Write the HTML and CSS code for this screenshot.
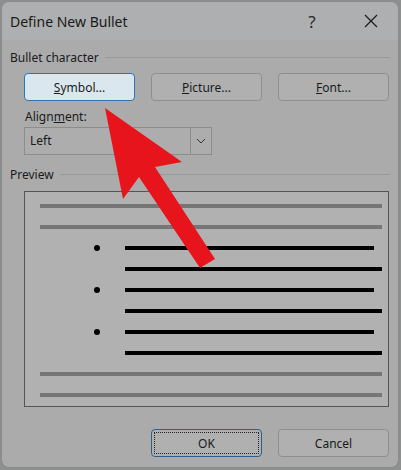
FILE: index.html
```html
<!DOCTYPE html>
<html lang="en">
<head>
    <meta charset="UTF-8">
    <title>Define New Bullet</title>
    <link rel="stylesheet" href="styles.css">
</head>
<body>
    <div class="dialog">
        <div class="titlebar">
            <span class="title">Define New Bullet</span>
            <span class="help">?</span>
            <span class="close">
                <svg width="14" height="14" viewBox="0 0 14 14"><path d="M1 1L13 13M13 1L1 13" stroke="#1e1e1e" stroke-width="1.3"/></svg>
            </span>
        </div>

        <div class="group-head"><span>Bullet character</span><i></i></div>
        <div class="btn-row">
            <button class="btn btn-active"><u>S</u>ymbol...</button>
            <button class="btn"><u>P</u>icture...</button>
            <button class="btn"><u>F</u>ont...</button>
        </div>

        <div class="field-label">Align<u>m</u>ent:</div>
        <div class="select">
            <span class="select-value">Left</span>
            <span class="select-arrow">
                <svg width="10" height="6" viewBox="0 0 10 6"><path d="M1 1L5 5L9 1" fill="none" stroke="#3a3a3a" stroke-width="1"/></svg>
            </span>
        </div>

        <div class="group-head preview-head"><span>Preview</span><i></i></div>
        <div class="preview">
            <div class="line gray"></div>
            <div class="line gray"></div>
            <div class="item"><b class="dot"></b><div class="line black short"></div></div>
            <div class="item"><div class="line black"></div></div>
            <div class="item"><b class="dot"></b><div class="line black short"></div></div>
            <div class="item"><div class="line black"></div></div>
            <div class="item"><b class="dot"></b><div class="line black short"></div></div>
            <div class="item"><div class="line black"></div></div>
            <div class="line gray"></div>
            <div class="line gray"></div>
        </div>

        <div class="footer">
            <button class="btn btn-ok"><span>OK</span></button>
            <button class="btn">Cancel</button>
        </div>

        <!-- red pointer drawn over the dialog -->
        <svg class="pointer" width="401" height="470" viewBox="0 0 401 470">
            <polygon points="105,108 182,162 155,167 215,259 200,268 139,177 123,199" fill="#e8141c"/>
        </svg>
    </div>
</body>
</html>
```

FILE: styles.css
```css
body {
    margin: 0;
    background-color: #8e8f8f;
    font-family: "Noto Sans", "Open Sans", sans-serif;
    color: #1a1a1a;
}
.dialog {
    position: relative;
    margin: 1px 2px 0 1px;
    height: 467px;
    background-color: #ababab;
    border: 1px solid #8a8a8a;
    border-radius: 8px;
    box-sizing: border-box;
    overflow: hidden;
}
.titlebar {
    display: flex;
    align-items: center;
    height: 38px;
    padding-left: 8px;
    background-color: #adafb0;
}
.title {
    font-size: 14px;
    flex: 1;
}
.help {
    font-size: 17px;
    width: 36px;
    margin-right: 31px;
    text-align: center;
    color: #2a2a2a;
}
.close {
    width: 20px;
    margin-right: 17px;
    display: flex;
    justify-content: center;
}
.group-head {
    display: flex;
    align-items: center;
    margin: 9px 8px 0 8px;
    font-size: 12px;
    height: 16px;
}
.group-head i {
    flex: 1;
    height: 1px;
    background-color: #9a9a9a;
    margin-left: 6px;
}
.btn-row {
    display: flex;
    gap: 16px;
    margin: 8px 0 0 22px;
}
.btn {
    width: 111px;
    height: 28px;
    background-color: #b0b0b0;
    border: 1px solid #8e8e8e;
    border-radius: 4px;
    font-family: inherit;
    font-size: 12px;
    color: #1a1a1a;
    padding: 0;
}
.btn-active {
    background-color: #dbe7ee;
    border-color: #2f73b2;
}
.field-label {
    margin: 7px 0 0 23px;
    font-size: 12px;
    height: 18px;
}
.select {
    display: flex;
    width: 188px;
    height: 28px;
    margin: 1px 0 0 22px;
    border: 1px solid #8c8c8c;
    box-sizing: border-box;
    background-color: #adadad;
}
.select-value {
    flex: 1;
    font-size: 12px;
    padding-left: 5px;
    line-height: 26px;
}
.select-arrow {
    width: 20px;
    border-left: 1px solid #8c8c8c;
    display: flex;
    align-items: center;
    justify-content: center;
}
.preview-head {
    margin-top: 11px;
}
.preview {
    margin: 9px 9px 0 22px;
    height: 216px;
    border: 1px solid #555;
    box-sizing: border-box;
    background-color: #b1b1b1;
    padding: 12px 6px 0 15px;
    display: flex;
    flex-direction: column;
    gap: 17px;
}
.line {
    height: 4px;
}
.gray {
    background-color: #767676;
}
.black {
    background-color: #000;
}
.item {
    position: relative;
    padding-left: 85px;
}
.short {
    margin-right: 8px;
}
.dot {
    position: absolute;
    left: 54px;
    top: -1px;
    width: 6px;
    height: 6px;
    border-radius: 50%;
    background-color: #000;
}
.footer {
    display: flex;
    justify-content: flex-end;
    gap: 16px;
    margin: 22px 9px 0 0;
}
.btn-ok {
    border-color: #2d5f8e;
    padding: 2px;
}
.btn-ok span {
    display: flex;
    align-items: center;
    justify-content: center;
    height: 100%;
    border: 1px dotted #222;
    box-sizing: border-box;
}
.pointer {
    position: absolute;
    left: -2px;
    top: -2px;
}
```
